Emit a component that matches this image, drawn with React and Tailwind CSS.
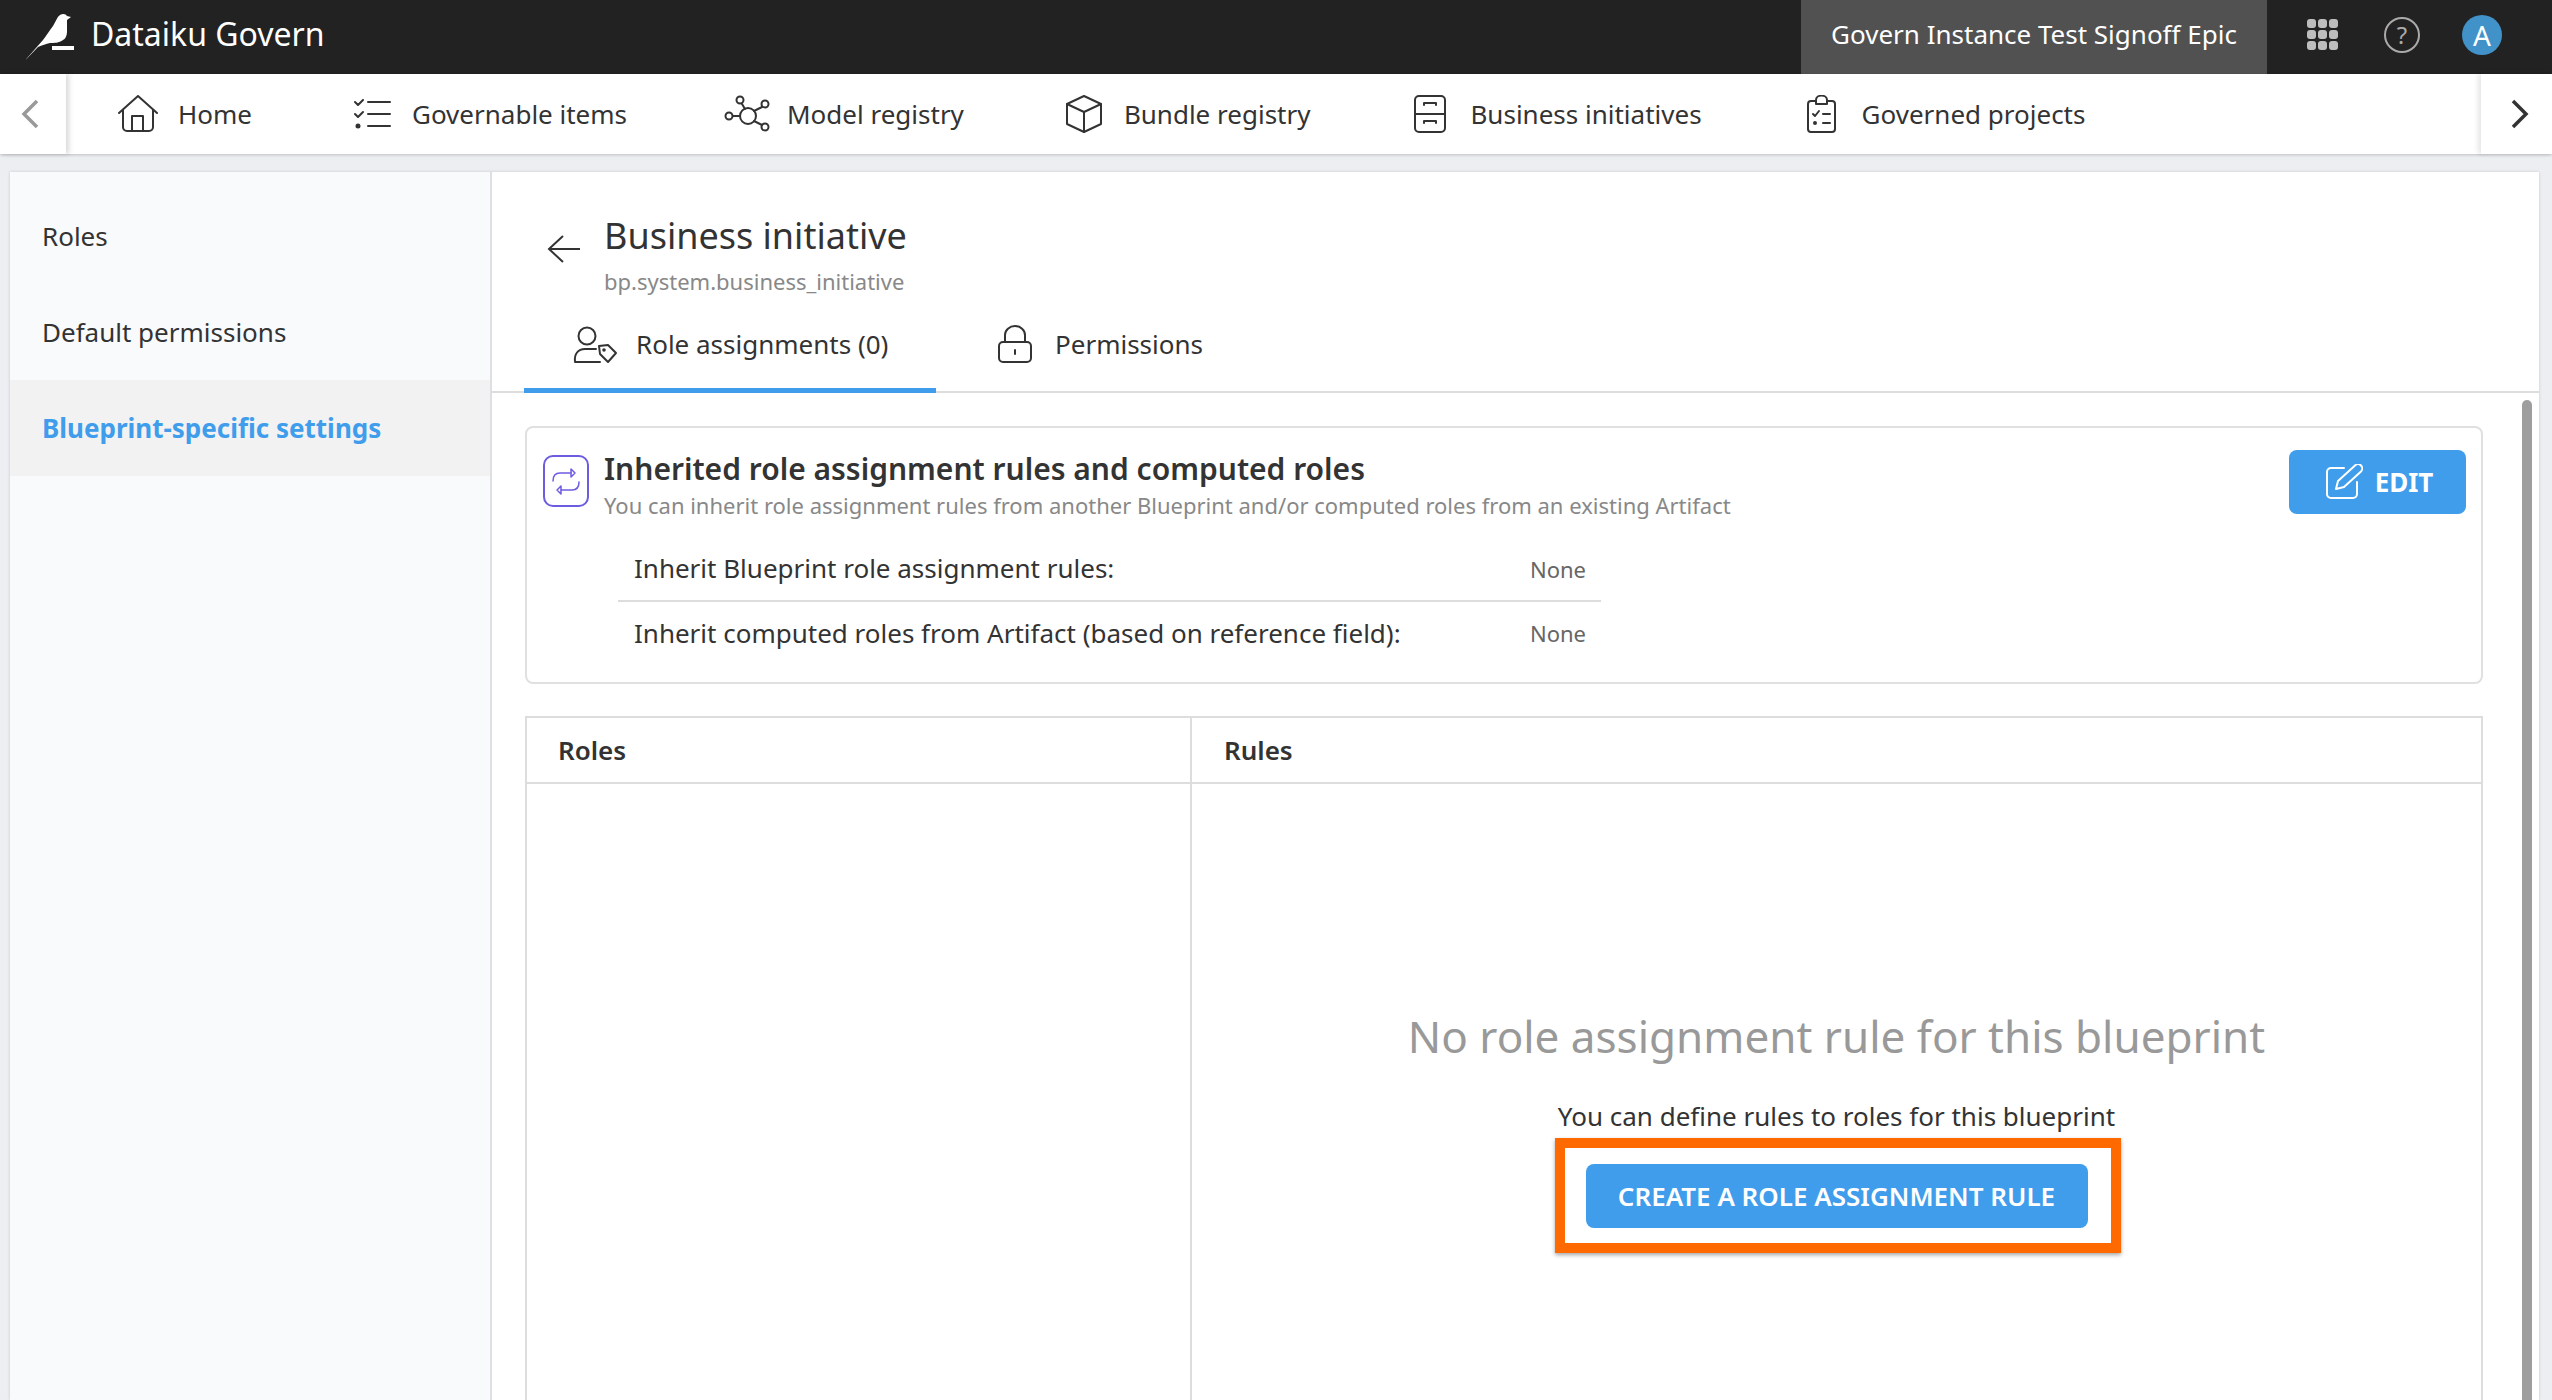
const Ico = ({ w, h, box, children, className = "" }) => (
  <svg
    width={w}
    height={h}
    viewBox={box}
    fill="none"
    stroke="currentColor"
    strokeWidth="2"
    strokeLinecap="round"
    strokeLinejoin="round"
    className={className}
  >
    {children}
  </svg>
);

const HomeIcon = () => (
  <Ico w={42} h={38} box="0 0 42 38">
    <path d="M2 18 L21 1 L40 18" />
    <path d="M6 15 V32 a4 4 0 0 0 4 4 H32 a4 4 0 0 0 4-4 V15" />
    <path d="M15 36 V21 H26 V36" />
  </Ico>
);

const ChecklistIcon = () => (
  <Ico w={38} h={30} box="0 0 38 30">
    <path d="M2 3 L5 6 L10 1" />
    <path d="M2 15 L5 18 L10 13" />
    <circle cx="5" cy="27" r="1.5" fill="currentColor" />
    <path d="M15 3 H37 M15 15 H37 M15 27 H37" />
  </Ico>
);

const ModelIcon = () => (
  <Ico w={47} h={38} box="724 95 47 38">
    <ellipse cx="748" cy="116" rx="8" ry="8" />
    <circle cx="740" cy="100" r="3.5" />
    <circle cx="765" cy="104" r="3.5" />
    <circle cx="729" cy="116" r="3.5" />
    <circle cx="765" cy="127" r="3.5" />
    <path d="M742 104 L745 109 M762 107 L754 111 M733 116 H740 M754 121 L762 125" />
  </Ico>
);

const CubeIcon = () => (
  <Ico w={38} h={38} box="0 0 38 38">
    <path d="M19 1 L36 9 V29 L19 37 L2 29 V9 Z" />
    <path d="M2 9 L19 17 L36 9 M19 17 V37" />
  </Ico>
);

const CabinetIcon = () => (
  <Ico w={32} h={38} box="0 0 32 38">
    <rect x="1" y="1" width="30" height="36" rx="4" />
    <path d="M1 19 H31" />
    <path d="M10 10 V8 H22 V10 M10 28 V26 H22 V28" />
  </Ico>
);

const ClipboardIcon = () => (
  <Ico w={29} h={38} box="0 0 29 38">
    <path d="M9 6 H4 a3 3 0 0 0-3 3 V34 a3 3 0 0 0 3 3 H25 a3 3 0 0 0 3-3 V9 a3 3 0 0 0-3-3 H20" />
    <path d="M9 9 V5 a5 4 0 0 1 11 0 V9 Z" />
    <path d="M6 19 L8 21 L12 16 M16 19 H23 M16 28 H23" />
    <circle cx="8" cy="28" r="1" fill="currentColor" />
  </Ico>
);

const UserTagIcon = () => (
  <Ico w={46} h={38} box="574 325 46 38">
    <circle cx="589" cy="335" r="8.5" />
    <path d="M602 361 H577 C576 353 580 348 587 348 H598" />
    <path d="M601 345 L610 344 L618 352 L610 361 L602 353 Z" />
    <circle cx="606" cy="349" r="0.8" fill="currentColor" />
  </Ico>
);

const LockIcon = () => (
  <Ico w={34} h={38} box="0 0 34 38">
    <rect x="1" y="17" width="32" height="20" rx="4" />
    <path d="M7 17 V10 a10 9 0 0 1 20 0 V17" />
    <path d="M17 25 V29" />
  </Ico>
);

const ArrowsBox = () => (
  <Ico w={46} h={52} box="542 456 46 52" className="text-[#6c5ce0] shrink-0">
    <rect x="543" y="457" width="44" height="50" rx="9" />
    <g strokeWidth="1.500">
      <path d="M552 482 C552 477 554 474 559 474 H570" />
      <path d="M570 470 L574 474 L570 478 Z" />
      <path d="M578 483 C578 488 576 491 571 491 H560" />
      <path d="M560 487 L556 491 L560 495 Z" />
    </g>
  </Ico>
);

const EditIcon = () => (
  <Ico w={38} h={36} box="2326 465 38 36">
    <path d="M2345 469 H2332 a4 4 0 0 0-4 4 V495 a4 4 0 0 0 4 4 H2354 a4 4 0 0 0 4-4 V483" />
    <path d="M2337 490 L2339 482 L2356 466.500 a3 3 0 0 1 6 6 L2345 488 Z" />
  </Ico>
);

const navItems = [
  { label: "Home", icon: <HomeIcon /> },
  { label: "Governable items", icon: <ChecklistIcon /> },
  { label: "Model registry", icon: <ModelIcon /> },
  { label: "Bundle registry", icon: <CubeIcon /> },
  { label: "Business initiatives", icon: <CabinetIcon /> },
  { label: "Governed projects", icon: <ClipboardIcon /> },
];

const TopBar = () => (
  <header className="h-[74px] bg-[#222222] flex items-center text-white">
    <svg width="50" height="48" viewBox="26 8 50 48" className="ml-[26px]" fill="#ffffff">
      <path d="M25 55.500 L43 35 C46 31 50 25 53 21 C56 16 57 12 60 10 C63 8 66 9 67 11 L71 12 L67 15 L67 27 C67 31 65 34 63 35 C59 38 54 38 50 38 C46 39 42 40 38 42 Z" />
      <rect x="52" y="41" width="22" height="4" />
    </svg>
    <span className="ml-[15px] pb-[6px] text-[32px]">Dataiku Govern</span>
    <div className="ml-auto h-full w-[466px] pb-[6px] bg-[#515151] flex items-center justify-center text-[26px]">
      Govern Instance Test Signoff Epic
    </div>
    <div className="flex items-center pb-[5px]">
      <div className="ml-[40px] grid grid-cols-3 gap-[2px]">
        {[...Array(9)].map((_, i) => (
          <span key={i} className="w-[9px] h-[9px] rounded-[3px] bg-[#bdbdbd]" />
        ))}
      </div>
      <div className="ml-[46px] w-[36px] h-[36px] rounded-full border-2 border-[#aaaaaa] text-[#aaaaaa] flex items-center justify-center text-[24px]">
        ?
      </div>
      <div className="ml-[42px] mr-[50px] w-[40px] h-[40px] rounded-full bg-[#4092c8] flex items-center justify-center text-[28px]">
        A
      </div>
    </div>
  </header>
);

const NavBar = () => (
  <nav className="h-[80px] bg-white flex items-center shadow-[0_1px_3px_rgba(0,0,0,0.2)] relative text-[#333333]">
    <div className="w-[66px] h-full pr-[7px] flex items-center justify-center shadow-[3px_0_5px_rgba(0,0,0,0.15)] text-[#999999]">
      <svg width="20" height="30" viewBox="0 0 20 30" fill="none" stroke="currentColor" strokeWidth="3.500">
        <path d="M17 2 L4 15 L17 28" />
      </svg>
    </div>
    <ul className="flex-1 flex items-center gap-[96px] pl-[48px]">
      {navItems.map((item) => (
        <li key={item.label} className="flex items-center gap-[16px] text-[26px]">
          <span className="w-[48px] flex justify-center">{item.icon}</span>
          {item.label}
        </li>
      ))}
    </ul>
    <div className="w-[71px] h-full pl-[6px] flex items-center justify-center shadow-[-3px_0_5px_rgba(0,0,0,0.1)]">
      <svg width="20" height="30" viewBox="0 0 20 30" fill="none" stroke="#333333" strokeWidth="3.500">
        <path d="M3 2 L16 15 L3 28" />
      </svg>
    </div>
  </nav>
);

const Sidebar = () => (
  <aside className="w-[482px] shrink-0 bg-[#f9fafc] border-r-2 border-[#dddfe2] pt-[16px] text-[26px] text-[#333333]">
    <div className="h-[96px] flex items-center pl-[32px]">Roles</div>
    <div className="h-[96px] flex items-center pl-[32px]">Default permissions</div>
    <div className="h-[96px] flex items-center pl-[32px] bg-[#f2f2f2] font-bold text-[#3f9deb]">
      Blueprint-specific settings
    </div>
  </aside>
);

const Header = () => (
  <div className="h-[221px] shrink-0 border-b-2 border-[#dddddd] flex flex-col">
    <div className="flex pl-[55px] pt-[39px]">
      <svg width="34" height="30" viewBox="0 0 34 30" fill="none" stroke="#333333" strokeWidth="2" className="mt-[23px]">
        <path d="M16 2 L2 15 L16 28 M2 15 H33" />
      </svg>
      <div className="ml-[23px]">
        <h1 className="text-[36px] leading-[50px] text-[#333333]">Business initiative</h1>
        <p className="text-[22px] leading-[30px] mt-[5px] text-[#888888]">bp.system.business_initiative</p>
      </div>
    </div>
    <div className="mt-auto ml-[32px] flex items-stretch h-[72px] text-[26px] text-[#333333]">
      <div className="w-[412px] -mb-[2px] border-b-[5px] border-[#3f9deb] flex items-center pl-[48px] pb-[18px] gap-[18px]">
        <UserTagIcon />
        Role assignments (0)
      </div>
      <div className="flex items-center pl-[62px] pb-[22px] gap-[23px]">
        <LockIcon />
        Permissions
      </div>
    </div>
  </div>
);

const InheritCard = () => (
  <section className="relative h-[258px] border-2 border-[#e0e0e0] rounded-[8px] pt-[27px] pl-[16px]">
    <div className="flex gap-[15px]">
      <ArrowsBox />
      <div className="-mt-[8px]">
        <h2 className="text-[30px] leading-[43px] font-semibold text-[#333333]">
          Inherited role assignment rules and computed roles
        </h2>
        <p className="text-[22px] leading-[30px] text-[#888888]">
          You can inherit role assignment rules from another Blueprint and/or computed roles from an existing Artifact
        </p>
      </div>
    </div>
    <div className="ml-[75px] mt-[19px] w-[983px] text-[26px] text-[#333333]">
      <div className="h-[63px] pb-[2px] border-b-2 border-[#dddddd] flex items-center justify-between pl-[16px] pr-[15px]">
        <span>Inherit Blueprint role assignment rules:</span>
        <span className="text-[22px] text-[#666666] mt-[1px]">None</span>
      </div>
      <div className="h-[68px] pb-[6px] flex items-center justify-between pl-[16px] pr-[15px]">
        <span>Inherit computed roles from Artifact (based on reference field):</span>
        <span className="text-[22px] text-[#666666] mt-[1px]">None</span>
      </div>
    </div>
    {/* edit button sits in the card corner */}
    <button className="absolute top-[22px] right-[15px] w-[177px] h-[64px] pl-[3px] rounded-[8px] bg-[#3f9deb] text-white flex items-center justify-center gap-[12px] text-[26px] font-bold">
      <EditIcon />
      EDIT
    </button>
  </section>
);

const RulesTable = () => (
  <section className="mt-[32px] flex-1 flex flex-col border-2 border-b-0 border-[#dddddd]">
    <div className="h-[66px] shrink-0 flex border-b-2 border-[#dddddd] text-[26px] font-semibold text-[#333333]">
      <div className="w-[665px] shrink-0 border-r-2 border-[#dddddd] pl-[31px] flex items-center">Roles</div>
      <div className="pl-[32px] flex items-center">Rules</div>
    </div>
    <div className="flex-1 flex">
      <div className="w-[665px] shrink-0 border-r-2 border-[#dddddd]" />
      <div className="flex-1 flex flex-col items-center pt-[220px]">
        <h3 className="text-[44px] leading-[64px] text-[#999999]">No role assignment rule for this blueprint</h3>
        <p className="mt-[30px] text-[26px] leading-[36px] text-[#333333]">You can define rules to roles for this blueprint</p>
        <button className="relative mt-[30px] w-[502px] h-[64px] rounded-[8px] bg-[#3f9deb] text-white text-[26px] font-semibold">
          CREATE A ROLE ASSIGNMENT RULE
          {/* orange annotation frame around the button */}
          <span className="absolute -left-[31px] -right-[33px] -top-[26px] -bottom-[25px] border-[10px] border-[#ff6a00] shadow-[0_2px_4px_rgba(0,0,0,0.35)]" />
        </button>
      </div>
    </div>
  </section>
);

export default function App() {
  return (
    <div className="w-[2552px] h-[1400px] overflow-hidden bg-[#eceef2] flex flex-col font-['Noto_Sans',sans-serif]">
      <TopBar />
      <NavBar />
      <main className="flex-1 min-h-0 flex mt-[18px] ml-[10px] mr-[13px] shadow-[0_0_3px_rgba(0,0,0,0.15)]">
        <Sidebar />
        <div className="flex-1 min-w-0 bg-white flex flex-col">
          <Header />
          <div className="flex-1 min-h-0 flex">
            <div className="flex-1 flex flex-col pl-[33px] pt-[33px]">
              <InheritCard />
              <RulesTable />
            </div>
            <div className="w-[10px] ml-[39px] mr-[7px] mt-[7px] rounded-t-full bg-[#9e9e9e]" />
          </div>
        </div>
      </main>
    </div>
  );
}
